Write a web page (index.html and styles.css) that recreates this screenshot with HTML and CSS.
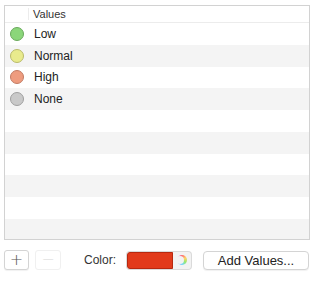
FILE: index.html
```html
<html>
<head>
<meta charset="UTF-8">
<link rel="stylesheet" href="styles.css">
</head>
<body>
<div id="values_section">
    <div class="header">
        <div class="header_icon_col"></div>
        <div class="header_title">Values</div>
    </div>
    <div class="row">
        <span class="dot low"></span><span class="label">Low</span>
    </div>
    <div class="row">
        <span class="dot normal"></span><span class="label">Normal</span>
    </div>
    <div class="row">
        <span class="dot high"></span><span class="label">High</span>
    </div>
    <div class="row">
        <span class="dot none"></span><span class="label">None</span>
    </div>
    <div class="row"></div>
    <div class="row"></div>
    <div class="row"></div>
    <div class="row"></div>
    <div class="row"></div>
    <div class="row"></div>
</div>
<div id="control_section">
    <button class="small_button">+</button>
    <button class="small_button disabled">&minus;</button>
    <span class="color_label">Color:</span>
    <div class="color_well">
        <span class="swatch"></span>
        <span class="picker"><span class="wheel"></span></span>
    </div>
    <button class="add_button">Add Values...</button>
</div>
</body>
</html>
```

FILE: styles.css
```css
body {
    margin: 0;
    background: #ffffff;
    font-family: "Liberation Sans", Arial, sans-serif;
    color: #222222;
}

#values_section {
    margin-left: 4px;
    margin-top: 5px;
    width: 304px;
    height: 233px;
    border: 1px solid #d2d2d2;
    overflow: hidden;
}

.header {
    display: flex;
    height: 16px;
    border-bottom: 1px solid #ececec;
    font-size: 11px;
    color: #333333;
}

.header_icon_col {
    width: 23px;
    margin: 2px 0;
    border-right: 1px solid #ececec;
}

.header_title {
    padding-left: 4px;
    line-height: 16px;
}

.row {
    display: flex;
    align-items: center;
    height: 21.75px;
    font-size: 12px;
}

.row:nth-child(odd) {
    background: #f4f4f4;
}

.dot {
    width: 12px;
    height: 12px;
    border-radius: 50%;
    margin-left: 5px;
    margin-right: 10px;
    border: 1px solid;
}

.dot.low {
    background: #8bd67a;
    border-color: #6aa95c;
}

.dot.normal {
    background: #e9eb8d;
    border-color: #b9bb6a;
}

.dot.high {
    background: #ee9c7f;
    border-color: #c27b63;
}

.dot.none {
    background: #c9c9c9;
    border-color: #9f9f9f;
}

#control_section {
    display: flex;
    align-items: center;
    padding-top: 10px;
    padding-left: 4px;
}

.small_button {
    width: 25px;
    height: 20px;
    padding: 0;
    background: #ffffff;
    border: 1px solid #d4d4d4;
    border-radius: 3px;
    font-family: "DejaVu Sans", sans-serif;
    font-size: 16px;
    font-weight: 300;
    line-height: 16px;
    color: #555555;
    box-shadow: 0 1px 1px rgba(0, 0, 0, 0.06);
}

.small_button.disabled {
    margin-left: 6px;
    width: 26px;
    border-color: #f0f0f0;
    color: #d6d6d6;
    box-shadow: none;
}

.color_label {
    margin-left: 23px;
    font-size: 12px;
    color: #333333;
}

.color_well {
    display: flex;
    margin-left: 11px;
    height: 17px;
    width: 64px;
    border-radius: 3px;
    background: #f2f2f2;
    box-shadow: 0 0 0 1px #dadada;
}

.swatch {
    width: 44px;
    background: #e23a1b;
    border: 1px solid #b8280f;
    border-radius: 3px 0 0 3px;
}

.picker {
    flex: 1;
    display: flex;
    align-items: center;
    justify-content: center;
}

.wheel {
    position: relative;
    width: 10px;
    height: 10px;
    border-radius: 50%;
    background: conic-gradient(#ff6a6a, #ffd36a, #9be86a, #6ad8ff, #8a7bff, #e06aff, #ff6a6a);
}

.wheel::after {
    content: "";
    position: absolute;
    left: -1px;
    top: 1px;
    width: 8px;
    height: 8px;
    border-radius: 50%;
    background: #f2f2f2;
}

.add_button {
    margin-left: 12px;
    width: 106px;
    height: 19px;
    padding: 0;
    background: #ffffff;
    border: 1px solid #d4d4d4;
    border-radius: 4px;
    font-family: "Liberation Sans", Arial, sans-serif;
    font-size: 13px;
    color: #222222;
    box-shadow: 0 1px 1px rgba(0, 0, 0, 0.06);
}
```
